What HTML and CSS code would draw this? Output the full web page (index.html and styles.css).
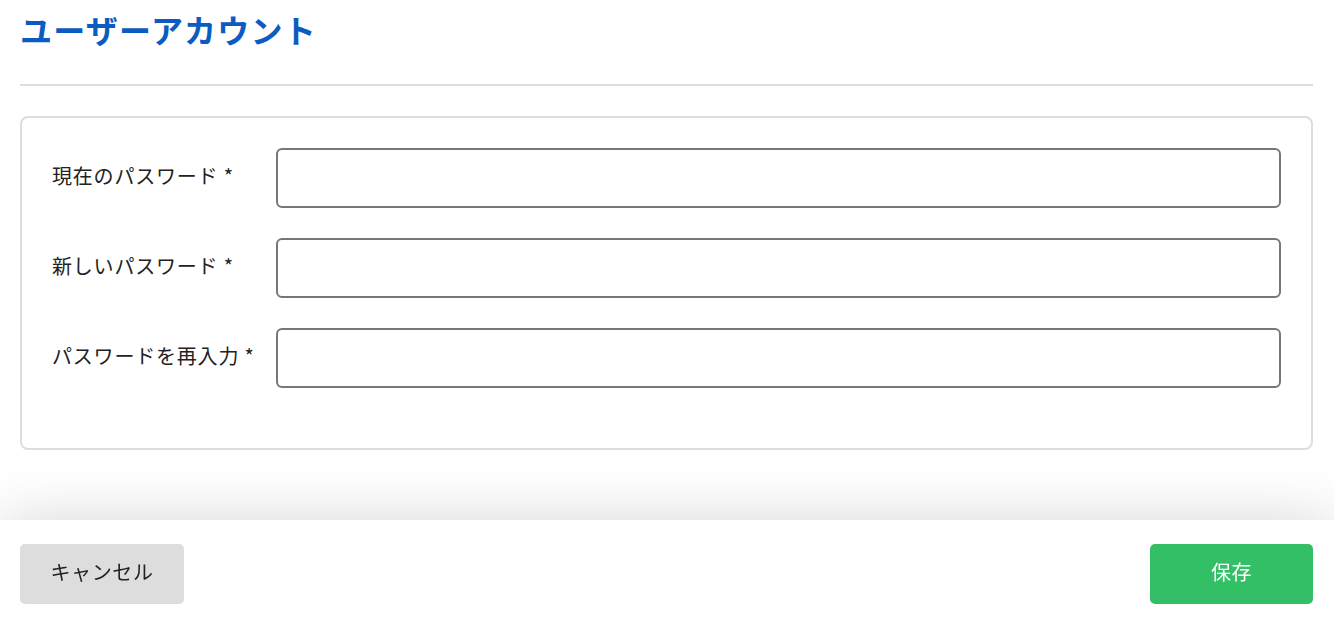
FILE: index.html
```html
<!DOCTYPE html>
<html lang="ja">
<head>
<meta charset="utf-8">
<title>ユーザーアカウント</title>
<link rel="stylesheet" href="styles.css">
</head>
<body>
<main class="page">
  <h1 class="title">ユーザーアカウント</h1>
  <hr class="divider">
  <form class="card">
    <label class="label" for="cur">現在のパスワード *</label>
    <input class="field" id="cur" type="password">
    <label class="label" for="new">新しいパスワード *</label>
    <input class="field" id="new" type="password">
    <label class="label" for="re">パスワードを再入力 *</label>
    <input class="field" id="re" type="password">
  </form>
</main>
<footer class="footer">
  <button class="btn btn-cancel" type="button">キャンセル</button>
  <button class="btn btn-save" type="button">保存</button>
</footer>
</body>
</html>
```
FILE: styles.css
```css
* { box-sizing: border-box; }
html, body { margin: 0; padding: 0; background: #fff; }
body {
  font-family: "Noto Sans CJK JP", "Noto Sans", sans-serif;
  color: #222;
  height: 618px;
  overflow: hidden;
}
.page {
  padding: 0 21px 0 20px;
}
.title {
  margin: 0;
  padding-top: 5px;
  font-size: 32px;
  line-height: 48px;
  font-weight: 700;
  color: #0a5cc2;
  letter-spacing: 1.2px;
}
.divider {
  margin: 31px 0 0;
  border: 0;
  height: 2px;
  background: #dddddd;
}
.card {
  margin-top: 30px;
  border: 2px solid #dddddd;
  border-radius: 8px;
  padding: 30px 30px 60px 30px;
  display: grid;
  grid-template-columns: 224px 1fr;
  row-gap: 30px;
  align-items: center;
}
.label {
  font-size: 20px;
  line-height: 28px;
  padding-bottom: 5px;
  letter-spacing: 0.8px;
  color: #222;
  white-space: nowrap;
}
.field {
  height: 60px;
  border: 2px solid #777777;
  border-radius: 6px;
  background: #fff;
  font-size: 18px;
  padding: 0 12px;
  outline: none;
}
.footer {
  position: fixed;
  left: 0;
  right: 0;
  bottom: 0;
  height: 98px;
  background: #fff;
  box-shadow: 0 0 60px rgba(0, 0, 0, 0.16);
  display: flex;
  justify-content: space-between;
  align-items: flex-start;
  padding: 24px 21px 0 20px;
}
.btn {
  height: 60px;
  border: 0;
  border-radius: 5px;
  font-family: "Noto Sans CJK JP", "Noto Sans", sans-serif;
  font-size: 20px;
  line-height: 28px;
  padding: 0 0 4px;
  letter-spacing: 0.6px;
  cursor: pointer;
}
.btn-cancel {
  width: 164px;
  background: #dddddd;
  color: #222;
}
.btn-save {
  width: 163px;
  background: #33bf66;
  color: #fff;
}
```
